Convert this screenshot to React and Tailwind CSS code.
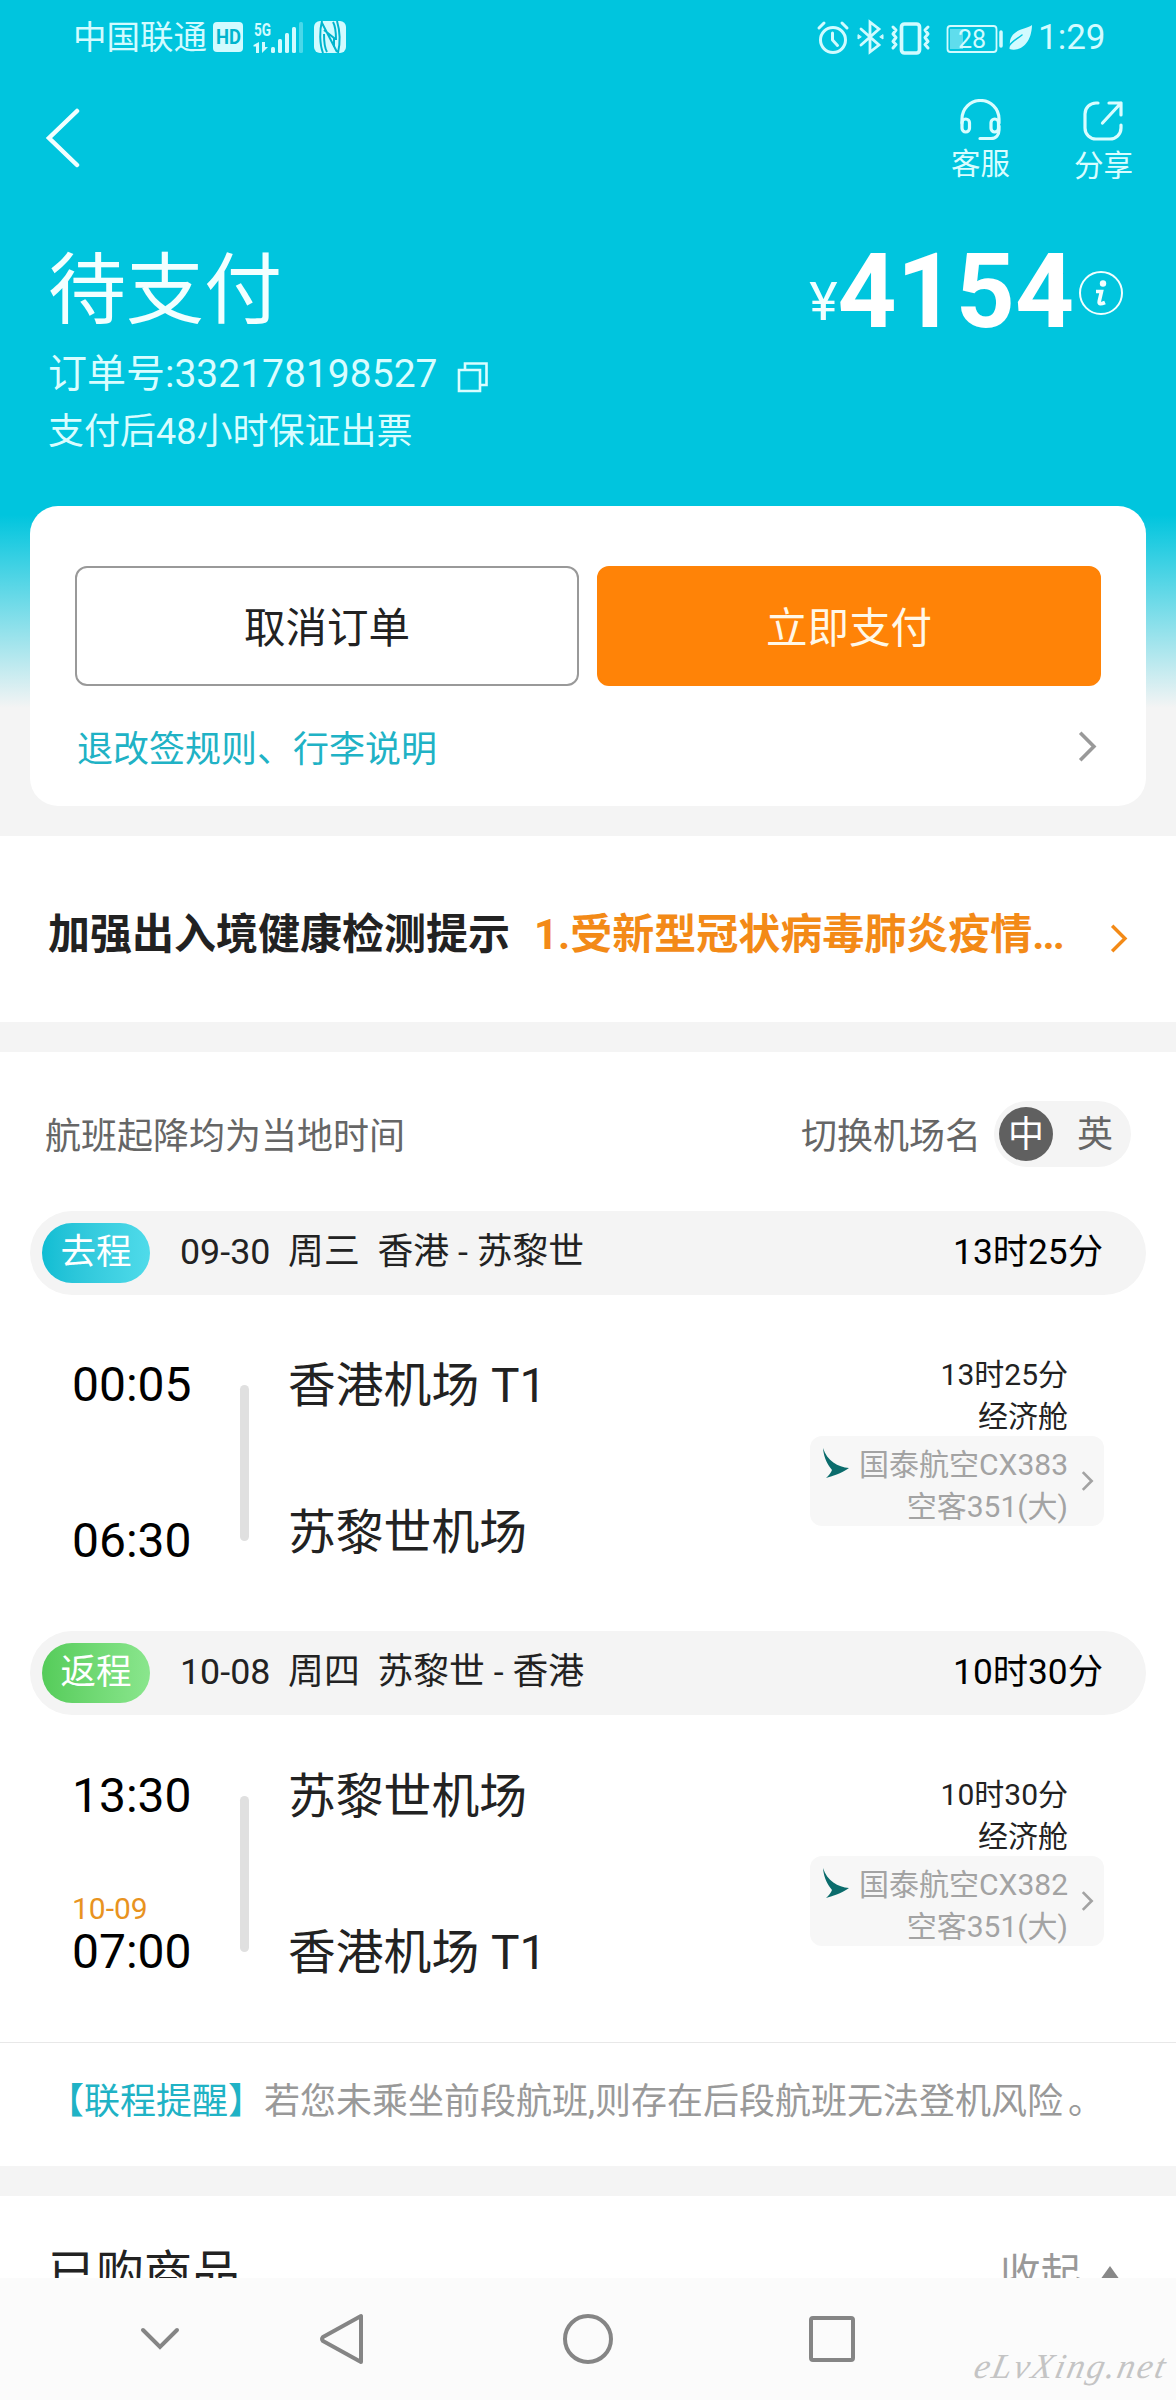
import React, { useState } from 'react';
import { clsx } from 'clsx';

const flights = [
    {
        id: 'CX383',
        type: '去程',
        badge: 'from-[#0fbdd3] to-[#4fdbea]',
        date: '09-30',
        week: '周三',
        route: '香港 - 苏黎世',
        duration: '13时25分',
        departTime: '00:05',
        departAirport: '香港机场 T1',
        arriveTime: '06:30',
        arriveAirport: '苏黎世机场',
    },
    {
        id: 'CX382',
        type: '返程',
        badge: 'from-[#55cc5a] to-[#8ae68d]',
        date: '10-08',
        week: '周四',
        route: '苏黎世 - 香港',
        duration: '10时30分',
        departTime: '13:30',
        departAirport: '苏黎世机场',
        arriveDate: '10-09',
        arriveTime: '07:00',
        arriveAirport: '香港机场 T1',
    },
];

const StatusBar = () => (
    <div className="flex h-[74px] items-center pl-[73px] pr-[71px] text-[#d2fbff]">
        <span className="w-[140px] pt-px text-[33.5px] leading-none">中国联通</span>
        <svg className="overflow-visible" width="136" height="34" viewBox="0 0 136 34" fill="currentColor">
            <rect x="0" y="2" width="30" height="30" rx="4" />
            <text x="3" y="24" fontSize="20" fontWeight="700" fill="#00b4cd" textLength="25" lengthAdjust="spacingAndGlyphs">HD</text>
            <text x="41" y="16" fontSize="19" fontWeight="700" textLength="17" lengthAdjust="spacingAndGlyphs">5G</text>
            <path d="M46 22v11h-3v-6.500h-2.500V25zM49 22v11l6-6h-3v-5z" />
            <rect x="58" y="27" width="4" height="6" rx="1.500" />
            <rect x="65" y="19" width="4" height="14" rx="1.500" />
            <rect x="72" y="13" width="4" height="20" rx="1.500" />
            <rect x="79" y="7" width="4" height="26" rx="1.500" />
            <rect x="86" y="2" width="4" height="31" rx="1.500" opacity=".35" />
            <rect x="101" y="1" width="32" height="32" rx="6" />
            <path d="M109 1c-2.500 9-2.500 23 1 32M109 3l15 29M125 33c2-9 2-22-1-32M111 14c0 7 0 13 3 18M123 20c0-7 0-13-3-18M111 10l10 8v9" fill="none" stroke="#00b4cd" strokeWidth="2" />
        </svg>
        <div className="grow" />
        <svg className="overflow-visible" width="221" height="34" viewBox="0 0 221 34" fill="none" stroke="currentColor" strokeWidth="3" strokeLinecap="round" strokeLinejoin="round">
            <circle cx="16" cy="20" r="12.500" />
            <path d="M15.500 13v7l5 5.500M2 8l5-5M30 8l-5-5" />
            <path d="M44 9l18 16-9 7V2l9 7-18 16" strokeWidth="2.800" strokeLinejoin="miter" />
            <path d="M41 15v4l3-2zM66 15v4l-3-2z" fill="currentColor" strokeWidth="1" />
            <rect x="84.500" y="4" width="18" height="29" rx="3" strokeWidth="3.700" />
            <path d="M76 7l3 3-3 4 3 3.500-3 4 3 3-3 3.500M111 7l-3 3 3 4-3 3.500 3 4-3 3 3 3.500" strokeWidth="3" />
            <rect x="130.500" y="6" width="49" height="26" rx="3" strokeWidth="1.800" />
            <rect x="133" y="9" width="13" height="20" fill="currentColor" stroke="none" opacity=".45" />
            <text x="141" y="28" fontSize="25" fill="currentColor" stroke="none">28</text>
            <path d="M184 12v14" strokeWidth="3.500" />
            <path d="M215 5c-5 4-20 4-22 16l-.5 8c8 3 22-3 22.500-24z" fill="currentColor" stroke="none" />
            <path d="M192 26c3-5 8-7 13-11" stroke="#00c5de" strokeWidth="1.500" />
        </svg>
        <span className="w-[67px] text-right text-[35px] leading-none">1:29</span>
    </div>
);

const Chevron = ({ className, width = 4 }) => (
    <svg className={className} viewBox="0 0 20 34" fill="none" stroke="currentColor" strokeWidth={width}>
        <path d="M2 2l15 15L2 32" />
    </svg>
);

const Header = () => (
    <div className="h-[432px] text-[#f2ffff]">
        <div className="flex items-start justify-between pl-[44px] pr-[43px] pt-[25px]">
            <svg className="mt-[9px]" width="36" height="60" viewBox="0 0 36 60" fill="none" stroke="currentColor" strokeWidth="4.500" strokeLinecap="round">
                <path d="M33 3L5 30l28 27" />
            </svg>
            <div className="flex gap-[64px] text-[29.5px] leading-[34px] text-[#d9fdff]">
                <div className="flex flex-col items-center">
                    <svg width="44" height="44" viewBox="0 0 44 44" fill="none" stroke="currentColor" strokeWidth="3.200" strokeLinecap="round">
                        <path d="M4 24v-4a18.500 18.500 0 0 1 37 0v4" />
                        <rect x="4" y="20" width="7.500" height="13" rx="3.700" />
                        <rect x="33" y="20" width="7.500" height="13" rx="3.700" />
                        <path d="M41 27v4c0 5-3 8.500-8 8.500H22" />
                    </svg>
                    <span className="mt-[4px]">客服</span>
                </div>
                <div className="flex flex-col items-center">
                    <svg width="44" height="44" viewBox="0 0 44 44" fill="none" stroke="currentColor" strokeWidth="3.200" strokeLinecap="round" strokeLinejoin="round">
                        <path d="M17 4h-2A11 11 0 0 0 4 15v14a11 11 0 0 0 11 11h14a11 11 0 0 0 11-11v-3" />
                        <path d="M28 4h12v12M40 4L21.500 24" />
                    </svg>
                    <span className="mt-[6px]">分享</span>
                </div>
            </div>
        </div>
        <div className="flex justify-between pl-[48px] pr-[52px] pt-[63px]">
            <div>
                <h1 className="text-[78px] leading-[92px]">待支付</h1>
                <div className="mt-[13px] flex items-center gap-[20px] text-[39px] leading-[46px] text-[#d9fdff]">
                    <span>订单号:332178198527</span>
                    <svg className="mt-[5px]" width="32" height="32" viewBox="0 0 32 32" fill="none" stroke="currentColor" strokeWidth="2.600">
                        <path d="M2 9h21v21H2z" />
                        <path d="M8 9V2.500h21.500V24H23" />
                    </svg>
                </div>
                <div className="mt-[14px] text-[36px] leading-[42px] text-[#d9fdff]">支付后48小时保证出票</div>
            </div>
            <div className="flex items-start">
                <span className="mt-[24px] text-[54px] leading-[64px]">¥</span>
                <span className="text-[103px] font-bold leading-[92px] text-white">4154</span>
                <svg className="ml-[4px] mt-[24px]" width="46" height="46" viewBox="0 0 46 46" fill="none" stroke="currentColor">
                    <circle cx="23" cy="23" r="21" strokeWidth="2" />
                    <circle cx="25" cy="13.500" r="3.200" fill="currentColor" stroke="none" />
                    <path d="M18 21.500h5.500l-2.300 10q-.8 4 5.800 1" strokeWidth="3.600" />
                </svg>
            </div>
        </div>
    </div>
);

const FlightCard = ({ flight }) => (
    <div className="h-[420px]">
        <div className="mx-[30px] flex h-[84px] items-center rounded-full bg-[#f4f4f4] pl-[12px] pr-[43px] text-[35.8px] leading-none">
            <span className={clsx('flex h-[60px] w-[108px] items-center justify-center rounded-full bg-linear-to-r text-[35.5px] text-white', flight.badge)}>
                {flight.type}
            </span>
            <span className="ml-[30px] grow whitespace-pre text-[#222]">
                {`${flight.date}  ${flight.week}  ${flight.route}`}
            </span>
            <span className="text-[35.3px] text-black">{flight.duration}</span>
        </div>
        <div className={clsx('flex pl-[72px] pr-[72px]', flight.arriveDate ? 'pt-[52px]' : 'pt-[61px]')}>
            <div className="flex h-[214px] w-[168px] flex-col justify-between text-[48px] leading-[58px] text-black">
                <span>{flight.departTime}</span>
                <div>
                    {flight.arriveDate && (
                        <div className="text-[30px] leading-[29px] text-[#e8931f]">{flight.arriveDate}</div>
                    )}
                    <div>{flight.arriveTime}</div>
                </div>
            </div>
            <div className="mt-[29px] h-[156px] w-[9px] rounded-full bg-[#e0e0e0]" />
            <div className={clsx('ml-[39px] flex grow flex-col justify-between pt-px text-[47.8px] leading-[58px] text-[#222]', flight.arriveDate ? 'h-[215px]' : 'h-[206px]')}>
                <span>{flight.departAirport}</span>
                <span>{flight.arriveAirport}</span>
            </div>
            <div className={clsx('text-right text-[30px] leading-[42px] text-[#222]', flight.arriveDate ? 'mt-[7px]' : 'mt-[-2px]')}>
                <div className="pr-[36px]">{flight.duration}</div>
                <div className="pr-[36px]">经济舱</div>
                <div className="mt-[-2px] flex h-[90px] w-[294px] items-center justify-end rounded-xl bg-[#f7f7f7] text-[#a3a3a3]">
                    <svg className="mb-[35px]" width="26" height="32" viewBox="0 0 26 32">
                        <path d="M0 0C1 11 5 17 9 22 8 25 6 27 3 30 9 28 18 26 26 20 15 19 4 13 0 0z" fill="#0b6c6c" />
                    </svg>
                    <div className="ml-[9px] w-[210px] pt-[9px]">
                        <div className="whitespace-nowrap">国泰航空{flight.id}</div>
                        <div>空客351(大)</div>
                    </div>
                    <Chevron className="ml-[13px] mr-[10px] h-[20px] w-[13px]" width={4.5} />
                </div>
            </div>
        </div>
    </div>
);

const App = () => {
    const [lang, setLang] = useState('zh');

    return (
        <div
            lang="zh-CN"
            className="h-[2400px] w-[1176px] overflow-hidden bg-[#f4f4f4] font-['Roboto','Noto_Sans_CJK_SC',sans-serif]"
        >
            <div className="h-[2278px] overflow-hidden">
                <div className="h-[836px] bg-[linear-gradient(180deg,#00c5de_0px,#00c5de_515px,#f4f4f4_708px)]">
                    <StatusBar />
                    <Header />
                    <div className="mx-[30px] h-[300px] rounded-[28px] bg-white px-[45px] pt-[60px]">
                        <div className="flex gap-[18px] text-[41.5px] leading-none">
                            <button className="h-[120px] flex-1 rounded-xl border-2 border-[#999] pt-[5px] text-[#222]">取消订单</button>
                            <button className="h-[120px] flex-1 rounded-xl border-2 border-[#ff8307] bg-[#ff8307] pt-[5px] text-[#fff8e8]">立即支付</button>
                        </div>
                        <div className="mt-[41px] flex h-[42px] items-center justify-between pl-[2px] pr-[4px] text-[36px] leading-[42px] text-[#20b2c5]">
                            <span className="mt-[4px]">退改签规则、行李说明</span>
                            <Chevron className="mb-[3px] h-[31px] w-[19px] text-[#999]" />
                        </div>
                    </div>
                </div>

                <div className="flex h-[186px] items-center bg-white pl-[48px] pr-[48px] pt-[12px] text-[42px] font-bold leading-none">
                    <span className="text-[#222]">加强出入境健康检测提示</span>
                    <span className="ml-[24px] grow text-[#f38a17]">
                        1.受新型冠状病毒肺炎疫情<span className="tracking-[-2px]">...</span>
                    </span>
                    <Chevron className="mt-[6px] h-[29px] w-[18px] text-[#f38a17]" />
                </div>

                <div className="mt-[30px] h-[1114px] bg-white">
                    <div className="flex h-[159px] items-center pb-[5px] pl-[45px] pr-[45px] pt-[10px] text-[36px] leading-none text-[#666]">
                        <span className="grow pt-[5px]">航班起降均为当地时间</span>
                        <span className="pt-[5px]">切换机场名</span>
                        <div className="ml-[13px] flex h-[66px] w-[137px] items-center rounded-full bg-[#f4f4f4] pb-px pl-[5px]">
                            <button
                                onClick={() => setLang('zh')}
                                className={clsx('h-[54px] w-[54px] rounded-full pt-[3px]', lang === 'zh' && 'bg-[#606060] text-white')}
                            >
                                中
                            </button>
                            <button
                                onClick={() => setLang('en')}
                                className={clsx('ml-[15px] h-[54px] w-[54px] rounded-full pt-[3px]', lang === 'en' && 'bg-[#606060] text-white')}
                            >
                                英
                            </button>
                        </div>
                    </div>
                    {flights.map((flight) => (
                        <FlightCard key={flight.id} flight={flight} />
                    ))}
                    <div className="mt-[-9px] h-[124px] border-t border-[#e8e8e8] pl-[48px] pt-[37px] text-[36px] leading-[44px] text-[#999]">
                        <span className="text-[#20b2c5]">【联程提醒】</span>
                        若您未乘坐前段航班,则存在后段航班无法登机风险<span className="ml-[5px]">。</span>
                    </div>
                </div>

                <div className="mt-[30px] flex h-[200px] justify-between bg-white pl-[48px] pr-[56px] pt-[49px] leading-[58px]">
                    <span className="text-[48px] text-[#222]">已购商品</span>
                    <span className="flex text-[40.5px] text-[#999]">
                        收起
                        <svg className="ml-[19px] mt-[21px]" width="20" height="14" viewBox="0 0 20 14" fill="#888">
                            <path d="M10 0l10 14H0z" />
                        </svg>
                    </span>
                </div>
            </div>

            <div className="flex h-[122px] items-center bg-[#fbfbfb] pl-[138px] text-[#858585]">
                <svg width="44" height="60" viewBox="0 0 44 60" fill="none" stroke="currentColor" strokeWidth="4" strokeLinecap="round">
                    <path d="M5 21l17 17 17-17" />
                </svg>
                <svg className="ml-[136px]" width="50" height="60" viewBox="0 0 50 60" fill="none" stroke="currentColor" strokeWidth="4" strokeLinejoin="round">
                    <path d="M43 7v46L5 32q-2-2 0-4z" />
                </svg>
                <svg className="ml-[190px]" width="60" height="60" viewBox="0 0 60 60" fill="none" stroke="currentColor" strokeWidth="4">
                    <circle cx="30" cy="30" r="23" />
                </svg>
                <svg className="ml-[184px]" width="60" height="60" viewBox="0 0 60 60" fill="none" stroke="currentColor" strokeWidth="4">
                    <rect x="9" y="9" width="42" height="42" rx="2" />
                </svg>
                <span className="ml-[113px] mt-[54px] -skew-x-12 whitespace-nowrap font-['Liberation_Serif',serif] text-[35px] italic leading-none tracking-[2.2px] text-[#c4c4c4]">
                    eLvXing.net
                </span>
            </div>
        </div>
    );
};

export default App;
